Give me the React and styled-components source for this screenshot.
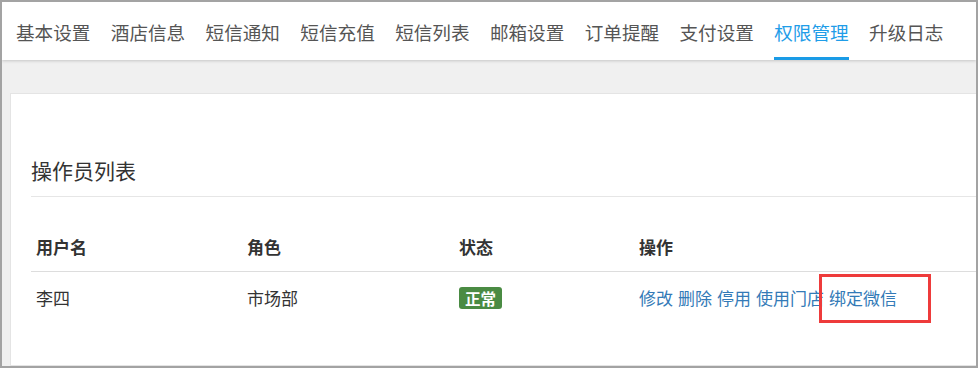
import React from 'react';
import styled, { createGlobalStyle } from 'styled-components';

const GlobalStyle = createGlobalStyle`
  html, body {
    margin: 0;
    padding: 0;
    background: #ffffff;
  }
  * {
    box-sizing: border-box;
  }
`;

const Frame = styled.div`
  width: 978px;
  height: 368px;
  border: 2px solid #a3a3a3;
  background: #f0f0f0;
  overflow: hidden;
  display: flex;
  flex-direction: column;
  font-family: "Noto Sans CJK SC", "Noto Sans", sans-serif;
`;

const TabBar = styled.nav`
  height: 58px;
  flex: none;
  display: flex;
  align-items: stretch;
  padding-left: 14px;
  background: #ffffff;
  box-shadow: 0 1px 3px rgba(0, 0, 0, 0.18);
  position: relative;
  z-index: 1;
`;

const Tab = styled.a`
  display: flex;
  align-items: center;
  margin-right: 20.4px;
  font-size: 18.6px;
  color: ${(p) => (p.$active ? '#1f9de8' : '#555555')};
  border-top: 3px solid transparent;
  border-bottom: 3px solid ${(p) => (p.$active ? '#1a9be6' : 'transparent')};
  white-space: nowrap;
  cursor: pointer;
`;

const Content = styled.main`
  flex: 1;
  padding: 33px 0 0 8px;
`;

const Card = styled.section`
  background: #ffffff;
  border: 1px solid #e4e4e4;
  margin-right: -4px;
  padding: 60px 0 0 20px;
  height: 100%;
`;

const CardTitle = styled.h2`
  margin: 0;
  height: 43px;
  line-height: 32px;
  font-size: 21px;
  font-weight: normal;
  color: #333333;
  border-bottom: 1px solid #e6e6e6;
`;

const Table = styled.div`
  margin-top: 30px;
`;

const Row = styled.div`
  display: grid;
  grid-template-columns: 211px 212px 180px 1fr;
  border-bottom: ${(p) => (p.$head ? '1px solid #dddddd' : 'none')};
`;

const Cell = styled.div`
  padding: ${(p) => (p.$head ? '8px 5px 12px' : '14px 5px')};
  line-height: 24px;
  font-size: 17px;
  font-weight: ${(p) => (p.$head ? 'bold' : 'normal')};
  color: #333333;
  display: flex;
  align-items: center;
  gap: 5px;
`;

const Badge = styled.span`
  display: inline-block;
  height: 22px;
  line-height: 22px;
  padding: 0 6px;
  border-radius: 3px;
  background: #4a8b43;
  color: #ffffff;
  font-size: 15.5px;
  font-weight: bold;
`;

const ActionLink = styled.a`
  position: relative;
  color: #337ab7;
  font-size: 17px;
  text-decoration: none;
  cursor: pointer;
`;

const Highlight = styled.span`
  position: absolute;
  left: -10px;
  right: -34px;
  top: -12px;
  bottom: -13px;
  border: 3px solid #ee3b3b;
  pointer-events: none;
`;

const tabs = ['基本设置', '酒店信息', '短信通知', '短信充值', '短信列表', '邮箱设置', '订单提醒', '支付设置', '权限管理', '升级日志'];

const operators = [
  { name: '李四', role: '市场部', status: '正常' },
];

const actions = ['修改', '删除', '停用', '使用门店'];

const App = () => {
  return (
    <>
      <GlobalStyle />
      <Frame>
        <TabBar>
          {tabs.map((t) => (
            <Tab key={t} $active={t === '权限管理'}>{t}</Tab>
          ))}
        </TabBar>
        <Content>
          <Card>
            <CardTitle>操作员列表</CardTitle>
            <Table>
              <Row $head>
                <Cell $head>用户名</Cell>
                <Cell $head>角色</Cell>
                <Cell $head>状态</Cell>
                <Cell $head>操作</Cell>
              </Row>
              {operators.map((op) => (
                <Row key={op.name}>
                  <Cell>{op.name}</Cell>
                  <Cell>{op.role}</Cell>
                  <Cell><Badge>{op.status}</Badge></Cell>
                  <Cell>
                    {actions.map((a) => (
                      <ActionLink key={a}>{a}</ActionLink>
                    ))}
                    <ActionLink>
                      绑定微信
                      <Highlight />
                    </ActionLink>
                  </Cell>
                </Row>
              ))}
            </Table>
          </Card>
        </Content>
      </Frame>
    </>
  );
};

export default App;
